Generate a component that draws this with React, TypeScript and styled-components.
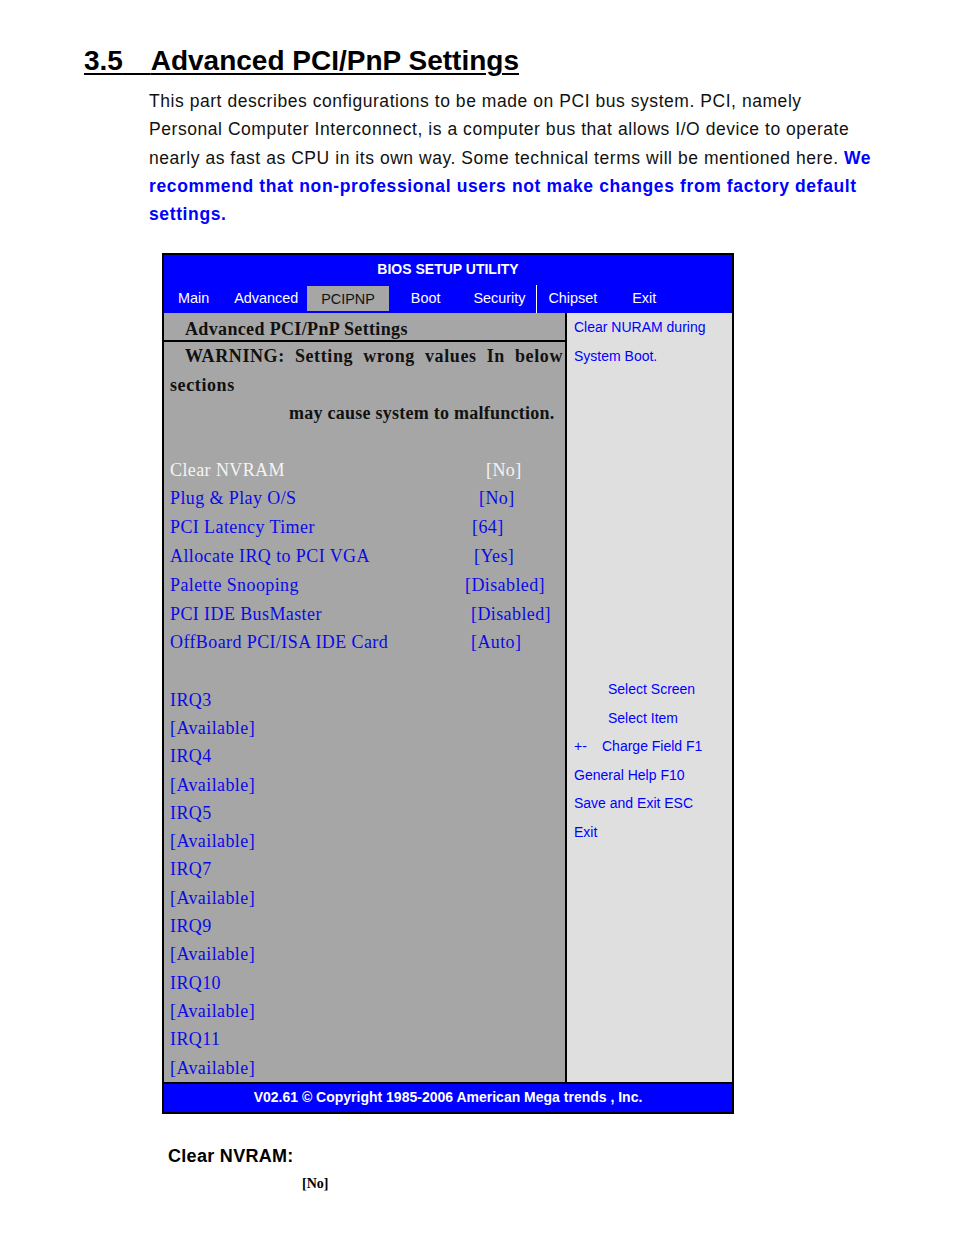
import React from 'react';
import styled, { createGlobalStyle } from 'styled-components';

const GlobalStyle = createGlobalStyle`
  html, body { margin: 0; padding: 0; background: #ffffff; }
  body { font-family: "Liberation Sans", Arial, sans-serif; color: #000; }
`;

const SANS = '"Liberation Sans", Arial, sans-serif';
const SERIF = '"Liberation Serif", "Times New Roman", serif';
const BLUE = '#0000ff';
const ITEM_BLUE = '#0a0ae6';

const Page = styled.div`
  width: 954px;
  min-height: 1233px;
  padding-top: 45px;
  box-sizing: border-box;
`;

const Heading = styled.h1`
  margin: 0 0 0 84px;
  font-family: ${SANS};
  font-size: 28px;
  font-weight: bold;
  line-height: 32px;
  text-decoration: underline;
  text-decoration-thickness: 2px;
  text-underline-offset: 3px;
  white-space: nowrap;
`;

const HeadGap = styled.span`
  letter-spacing: 20px;
`;

const Intro = styled.p`
  margin: 10px 0 0 149px;
  width: 760px;
  font-family: ${SANS};
  font-size: 17.5px;
  letter-spacing: 0.55px;
  line-height: 28.3px;
  color: #111;
  white-space: nowrap;
`;

const Emph = styled.span`
  color: ${BLUE};
  font-weight: bold;
  letter-spacing: 0.62px;
`;

const Bios = styled.div`
  margin: 25px 0 0 162px;
  width: 572px;
  border: 2px solid #000;
  box-sizing: border-box;
  font-family: ${SANS};
`;

const TitleBar = styled.div`
  height: 28px;
  background: ${BLUE};
  color: #fff;
  font-size: 14px;
  font-weight: bold;
  line-height: 28px;
  text-align: center;
`;

const TabRow = styled.div`
  height: 30px;
  background: ${BLUE};
  display: flex;
  align-items: stretch;
`;

const Tab = styled.div<{ $gap: number; $active?: boolean }>`
  margin-left: ${(p) => p.$gap}px;
  margin-top: ${(p) => (p.$active ? 3 : 0)}px;
  margin-bottom: ${(p) => (p.$active ? 2 : 0)}px;
  padding: 0 ${(p) => (p.$active ? 14 : 0)}px;
  background: ${(p) => (p.$active ? '#a6a6a6' : 'transparent')};
  color: ${(p) => (p.$active ? '#111' : '#fff')};
  font-size: 14.4px;
  line-height: ${(p) => (p.$active ? 26 : 31)}px;
  white-space: nowrap;
`;

const TabDivider = styled.div<{ $gap: number }>`
  margin-left: ${(p) => p.$gap}px;
  margin-top: 2px;
  width: 1px;
  background: #fff;
`;

const Main = styled.div`
  display: grid;
  grid-template-columns: 403px 1fr;
`;

const LeftPane = styled.div`
  background: #a6a6a6;
  border-right: 2px solid #000;
`;

const PaneTitle = styled.div`
  height: 27px;
  border-bottom: 2px solid #000;
  padding-left: 21px;
  font-family: ${SERIF};
  font-size: 18px;
  font-weight: bold;
  letter-spacing: 0.35px;
  line-height: 32px;
  color: #111;
  white-space: nowrap;
`;

const LeftList = styled.div`
  padding: 0 2px 0 6px;
  font-family: ${SERIF};
  font-size: 18px;
  letter-spacing: 0.4px;
`;

const WarnLine = styled.div<{ $indent?: number; $justify?: boolean; $tight?: boolean }>`
  padding-left: ${(p) => p.$indent || 0}px;
  font-weight: bold;
  color: #111;
  line-height: 28.3px;
  letter-spacing: ${(p) => (p.$tight ? 0.25 : 0.6)}px;
  text-align: ${(p) => (p.$justify ? 'justify' : 'left')};
  text-align-last: ${(p) => (p.$justify ? 'justify' : 'auto')};
  white-space: nowrap;
`;

const Blank = styled.div<{ $h: number }>`
  height: ${(p) => p.$h}px;
`;

const ItemRow = styled.div<{ $selected?: boolean }>`
  display: grid;
  grid-template-columns: 295px 1fr;
  line-height: 28.8px;
  color: ${(p) => (p.$selected ? '#f4f4f4' : ITEM_BLUE)};
  white-space: nowrap;
`;

const ItemValue = styled.span<{ $shift: number }>`
  padding-left: ${(p) => p.$shift}px;
`;

const IrqLine = styled.div`
  line-height: 28.3px;
  color: ${ITEM_BLUE};
  white-space: nowrap;
`;

const RightPane = styled.div`
  background: #dfdfdf;
  padding-left: 7px;
  font-size: 14px;
  line-height: 28.5px;
  color: ${BLUE};
`;

const HelpBlock = styled.div`
  margin-top: 305px;
  line-height: 28.4px;
`;

const HelpLine = styled.div<{ $indent?: number }>`
  padding-left: ${(p) => p.$indent || 0}px;
  white-space: nowrap;
`;

const KeySym = styled.span`
  display: inline-block;
  width: 28px;
`;

const Footer = styled.div`
  border-top: 2px solid #000;
  height: 28px;
  background: ${BLUE};
  color: #fff;
  font-size: 14px;
  font-weight: bold;
  line-height: 27px;
  text-align: center;
  white-space: nowrap;
`;

const FieldTitle = styled.div`
  margin: 30px 0 0 168px;
  font-family: ${SANS};
  font-size: 18px;
  font-weight: bold;
  letter-spacing: 0.3px;
  line-height: 24px;
`;

const FieldValue = styled.div`
  margin: 6px 0 0 302px;
  font-family: ${SERIF};
  font-size: 14px;
  font-weight: bold;
  line-height: 20px;
`;

const tabs = [
  { label: 'Main', gap: 14 },
  { label: 'Advanced', gap: 25 },
  { label: 'PCIPNP', gap: 9, active: true },
  { label: 'Boot', gap: 22 },
  { label: 'Security', gap: 33 },
];
const tabsAfter = [
  { label: 'Chipset', gap: 11 },
  { label: 'Exit', gap: 35 },
];

const items = [
  { label: 'Clear NVRAM', value: '[No]', shift: 21, selected: true },
  { label: 'Plug & Play O/S', value: '[No]', shift: 14 },
  { label: 'PCI Latency Timer', value: '[64]', shift: 7 },
  { label: 'Allocate IRQ to PCI VGA', value: '[Yes]', shift: 9 },
  { label: 'Palette Snooping', value: '[Disabled]', shift: 0 },
  { label: 'PCI IDE BusMaster', value: '[Disabled]', shift: 6 },
  { label: 'OffBoard PCI/ISA IDE Card', value: '[Auto]', shift: 6 },
];

const irqs = ['IRQ3', 'IRQ4', 'IRQ5', 'IRQ7', 'IRQ9', 'IRQ10', 'IRQ11'];

export default function App() {
  return (
    <Page>
      <GlobalStyle />
      <Heading>
        3.5<HeadGap>{'\u00a0'}</HeadGap>Advanced PCI/PnP Settings
      </Heading>
      <Intro>
        This part describes configurations to be made on PCI bus system. PCI, namely
        <br />
        Personal Computer Interconnect, is a computer bus that allows I/O device to operate
        <br />
        nearly as fast as CPU in its own way. Some technical terms will be mentioned here. <Emph>We</Emph>
        <br />
        <Emph>recommend that non-professional users not make changes from factory default</Emph>
        <br />
        <Emph>settings.</Emph>
      </Intro>

      <Bios>
        <TitleBar>BIOS SETUP UTILITY</TitleBar>
        <TabRow>
          {tabs.map((t) => (
            <Tab key={t.label} $gap={t.gap} $active={t.active}>
              {t.label}
            </Tab>
          ))}
          <TabDivider $gap={11} />
          {tabsAfter.map((t) => (
            <Tab key={t.label} $gap={t.gap}>
              {t.label}
            </Tab>
          ))}
        </TabRow>
        <Main>
          <LeftPane>
            <PaneTitle>Advanced PCI/PnP Settings</PaneTitle>
            <LeftList>
              <WarnLine $indent={15} $justify>
                WARNING: Setting wrong values In below
              </WarnLine>
              <WarnLine>sections</WarnLine>
              <WarnLine $indent={119} $tight>
                may cause system to malfunction.
              </WarnLine>
              <Blank $h={28.3} />
              {items.map((it) => (
                <ItemRow key={it.label} $selected={it.selected}>
                  <span>{it.label}</span>
                  <ItemValue $shift={it.shift}>{it.value}</ItemValue>
                </ItemRow>
              ))}
              <Blank $h={28.4} />
              {irqs.map((q) => (
                <React.Fragment key={q}>
                  <IrqLine>{q}</IrqLine>
                  <IrqLine>[Available]</IrqLine>
                </React.Fragment>
              ))}
            </LeftList>
          </LeftPane>
          <RightPane>
            <HelpLine>Clear NURAM during</HelpLine>
            <HelpLine>System Boot.</HelpLine>
            <HelpBlock>
              <HelpLine $indent={34}>Select Screen</HelpLine>
              <HelpLine $indent={34}>Select Item</HelpLine>
              <HelpLine>
                <KeySym>+-</KeySym>Charge Field F1
              </HelpLine>
              <HelpLine>General Help F10</HelpLine>
              <HelpLine>Save and Exit ESC</HelpLine>
              <HelpLine>Exit</HelpLine>
            </HelpBlock>
          </RightPane>
        </Main>
        <Footer>V02.61 © Copyright 1985-2006 American Mega trends , Inc.</Footer>
      </Bios>

      <FieldTitle>Clear NVRAM:</FieldTitle>
      <FieldValue>[No]</FieldValue>
    </Page>
  );
}
